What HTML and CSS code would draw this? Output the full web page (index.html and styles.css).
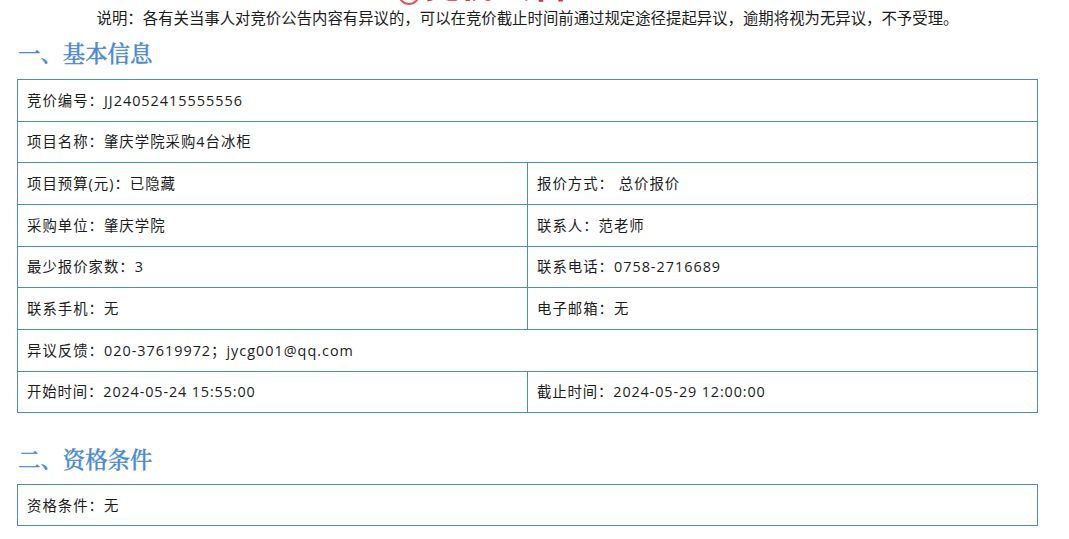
FILE: index.html
```html
<!DOCTYPE html>
<html lang="zh-CN">
<head>
<meta charset="utf-8">
<title>竞价公告</title>
<link rel="stylesheet" href="styles.css">
</head>
<body>
<div class="page">
  <div class="banner"><span class="ring"></span><span class="banner-text">竞价公告</span></div>
  <p class="note">说明：各有关当事人对竞价公告内容有异议的，可以在竞价截止时间前通过规定途径提起异议，逾期将视为无异议，不予受理。</p>
  <h2 class="section-title first">一、基本信息</h2>
  <table class="info">
    <colgroup><col class="half"><col class="half"></colgroup>
    <tr class="r42"><td colspan="2">竞价编号：JJ24052415555556</td></tr>
    <tr class="r41 tight"><td colspan="2">项目名称：肇庆学院采购4台冰柜</td></tr>
    <tr class="r42"><td>项目预算(元)：已隐藏</td><td>报价方式： 总价报价</td></tr>
    <tr class="r42"><td>采购单位：肇庆学院</td><td>联系人：范老师</td></tr>
    <tr class="r41 tight"><td>最少报价家数：3</td><td>联系电话：0758-2716689</td></tr>
    <tr class="r42"><td>联系手机：无</td><td>电子邮箱：无</td></tr>
    <tr class="r42"><td colspan="2">异议反馈：020-37619972；jycg001@qq.com</td></tr>
    <tr class="r41 tight"><td class="time">开始时间：2024-05-24 15:55:00</td><td class="time">截止时间：2024-05-29 12:00:00</td></tr>
  </table>
  <h2 class="section-title">二、资格条件</h2>
  <table class="info">
    <tr class="r41"><td>资格条件：无</td></tr>
  </table>
</div>
</body>
</html>
```
FILE: styles.css
```css
html, body {
  margin: 0;
  padding: 0;
  background: #fff;
  overflow: hidden;
}
body {
  height: 539px;
  font-family: "Open Sans", "Noto Sans CJK SC", sans-serif;
  color: #1c1c1c;
}
.page {
  margin: 0 31px 0 17px;
}
.banner {
  height: 5px;
  overflow: hidden;
  display: flex;
  justify-content: center;
  gap: 4px;
  padding-right: 88px;
}
.ring {
  flex: none;
  width: 18px;
  height: 18px;
  margin-top: -17px;
  border: 2px solid #e0565b;
  border-radius: 50%;
}
.banner-text {
  margin-top: -36px;
  font: bold 36px/36px "Noto Sans CJK SC", sans-serif;
  color: #d9363c;
}
.note {
  margin: 3px 0 0;
  font-size: 15.4px;
  line-height: 19px;
  text-align: center;
  font-family: "Noto Sans CJK SC", sans-serif;
}
.section-title {
  margin: 30px 0 11px;
  padding-left: 1px;
  font: 500 22.4px/30px "Noto Serif CJK SC", serif;
  -webkit-text-stroke: 0.35px #4a8bd0;
  color: #4a8bd0;
}
.section-title.first {
  margin-top: 10px;
  margin-bottom: 12px;
}
.info {
  width: 1021px;
  border-collapse: collapse;
  table-layout: fixed;
  font-size: 14.4px;
  letter-spacing: 1px;
}
.half {
  width: 50%;
}
.info td {
  padding: 0 9px 2px;
  border: 1px solid #4b8cc2;
}
.info .tight td {
  padding-bottom: 4px;
}
.info .time {
  letter-spacing: 0.87px;
}
.r42 { height: 42px; }
.r41 { height: 41px; }
```
